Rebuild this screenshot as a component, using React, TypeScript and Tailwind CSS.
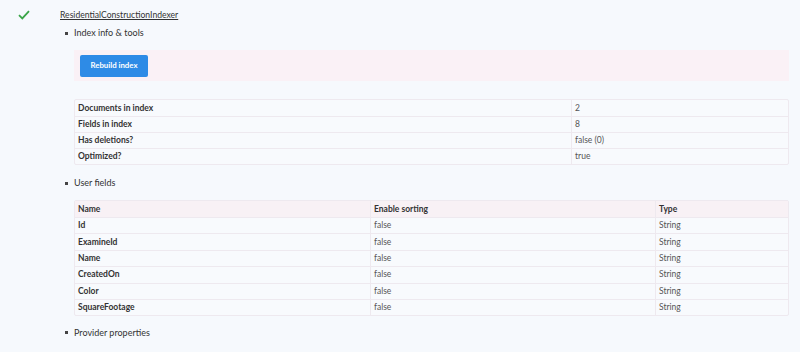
import React from "react";

const Check = () => (
  <svg width="12" height="10" viewBox="0 0 12 10" className="block">
    <path d="M1 5.2 L4.3 8.4 L11 1.2" fill="none" stroke="#3aa548" strokeWidth="1.8" />
  </svg>
);

const Bullet = ({ children }: { children: React.ReactNode }) => (
  <div className="flex items-center h-[14px]">
    <span className="w-[3px] h-[3px] bg-[#444] ml-[65px] mr-[6px]" />
    <span className="text-[9px] text-[#333]">{children}</span>
  </div>
);

const info = [
  ["Documents in index", "2"],
  ["Fields in index", "8"],
  ["Has deletions?", "false (0)"],
  ["Optimized?", "true"],
];

const fields = ["Id", "ExamineId", "Name", "CreatedOn", "Color", "SquareFootage"];

export default function App() {
  return (
    <div
      className="w-[800px] h-[352px] bg-[#f6f9fd] overflow-hidden"
      style={{ fontFamily: "Lato, 'Noto Sans', sans-serif" }}
    >
      <div className="flex items-center h-[14px] mt-[8px]">
        <span className="ml-[18px] w-[42px]">
          <Check />
        </span>
        <span className="text-[8.6px] text-[#333] underline">ResidentialConstructionIndexer</span>
      </div>
      <div className="mt-[4px]">
        <Bullet>Index info &amp; tools</Bullet>
      </div>
      <div className="ml-[74px] mr-[11px] mt-[10px] h-[31px] bg-[#faf1f6] flex items-center pl-[6px]">
        <button className="h-[22px] w-[68px] bg-[#2e8be6] rounded-[2px] text-white text-[7.8px] font-bold">
          Rebuild index
        </button>
      </div>
      <div className="ml-[74px] mr-[11px] mt-[18px] border border-[#eee9ef] rounded-[2px] bg-[#f8fafd]">
        {info.map(([k, v], i) => (
          <div key={k} className={`flex h-[16px] ${i > 0 ? "border-t border-[#eee9ef]" : ""}`}>
            <div className="w-[496px] pl-[3px] text-[8.5px] font-bold text-[#333] flex items-center">{k}</div>
            <div className="flex-1 pl-[3px] text-[8.5px] text-[#555] border-l border-[#eee9ef] flex items-center">{v}</div>
          </div>
        ))}
      </div>
      <div className="mt-[11px]">
        <Bullet>User fields</Bullet>
      </div>
      <div className="ml-[74px] mr-[11px] mt-[10px] border border-[#eee9ef] rounded-[2px] bg-[#f8fafd]">
        <div className="flex h-[16px] bg-[#f8f1f5]">
          <div className="w-[295px] pl-[3px] text-[8.5px] font-bold text-[#333] flex items-center">Name</div>
          <div className="w-[285px] pl-[3px] text-[8.5px] font-bold text-[#333] border-l border-[#eee9ef] flex items-center">Enable sorting</div>
          <div className="flex-1 pl-[3px] text-[8.5px] font-bold text-[#333] border-l border-[#eee9ef] flex items-center">Type</div>
        </div>
        {fields.map((f) => (
          <div key={f} className="flex h-[16.4px] border-t border-[#eee9ef]">
            <div className="w-[295px] pl-[3px] text-[8.5px] font-bold text-[#333] flex items-center">{f}</div>
            <div className="w-[285px] pl-[3px] text-[8.5px] text-[#555] border-l border-[#eee9ef] flex items-center">false</div>
            <div className="flex-1 pl-[3px] text-[8.5px] text-[#555] border-l border-[#eee9ef] flex items-center">String</div>
          </div>
        ))}
      </div>
      <div className="mt-[9px]">
        <Bullet>Provider properties</Bullet>
      </div>
    </div>
  );
}
